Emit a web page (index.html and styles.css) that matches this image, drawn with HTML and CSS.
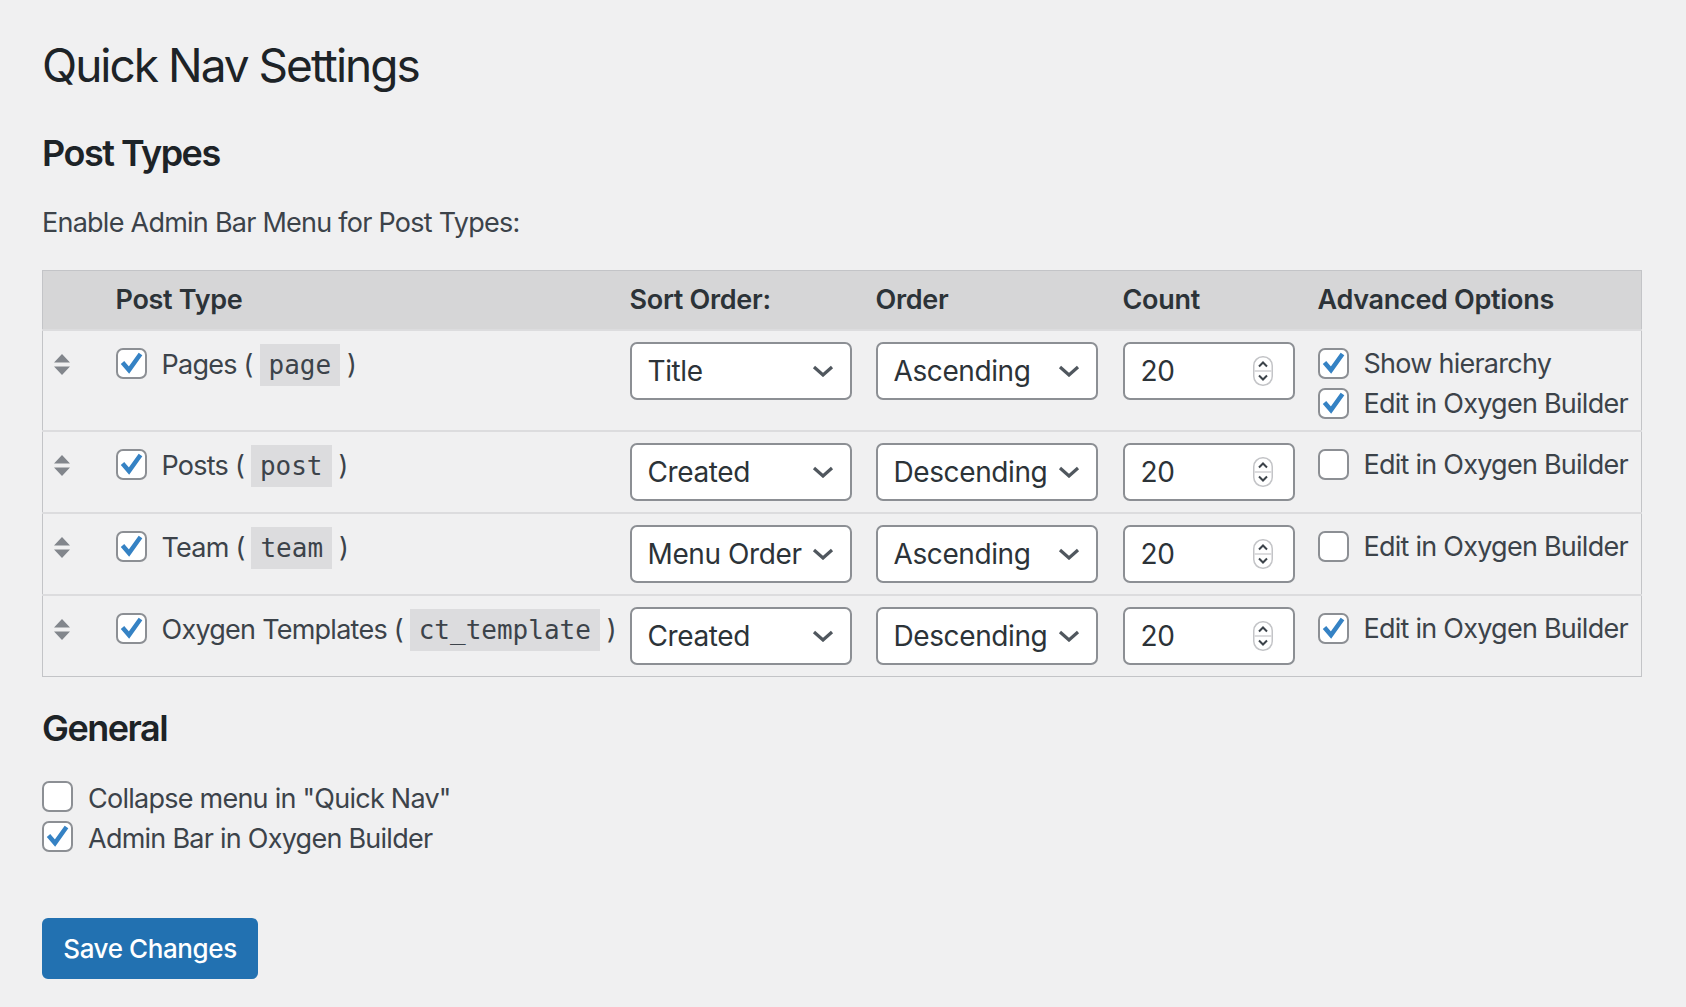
FILE: index.html
```html
<!DOCTYPE html>
<html lang="en">
<head>
    <meta charset="UTF-8">
    <meta name="viewport" content="width=device-width, initial-scale=1.0">
    <title>Quick Nav Settings</title>
    <link rel="stylesheet" href="styles.css">
</head>
<body>
<div class="wrap">
    <h1>Quick Nav Settings</h1>

    <h2>Post Types</h2>
    <p class="intro">Enable Admin Bar Menu for Post Types:</p>

    <table class="types">
        <colgroup>
            <col class="col-handle">
            <col class="col-type">
            <col class="col-sort">
            <col class="col-order">
            <col class="col-count">
            <col class="col-advanced">
        </colgroup>
        <thead>
        <tr>
            <th></th>
            <th>Post Type</th>
            <th>Sort Order:</th>
            <th>Order</th>
            <th>Count</th>
            <th>Advanced Options</th>
        </tr>
        </thead>
        <tbody>
        <tr>
            <td class="handle">
                <svg width="16" height="21" viewBox="0 0 16 21"><path d="M8 0 16 8.5H0z M0 12.5h16L8 21z"/></svg>
            </td>
            <td>
                <label class="check">
                    <span class="box on"><svg viewBox="0 0 27 27"><path d="M4.5 12.5 11 20 22.5 4"/></svg></span>
                    <span class="label">Pages ( <code>page</code> )</span>
                </label>
            </td>
            <td><div class="select">Title<svg viewBox="0 0 22 12"><path d="M2 2l9 8 9-8"/></svg></div></td>
            <td><div class="select">Ascending<svg viewBox="0 0 22 12"><path d="M2 2l9 8 9-8"/></svg></div></td>
            <td>
                <div class="number">20
                    <svg class="spin" viewBox="0 0 20 30"><rect x=".75" y=".75" width="18.5" height="28.5" rx="9"/><path class="line" d="M1 15h18"/><path d="M6 10.5 10 6.5l4 4M6 19.5l4 4 4-4"/></svg>
                </div>
            </td>
            <td>
                <div class="options">
                    <label class="check">
                        <span class="box on"><svg viewBox="0 0 27 27"><path d="M4.5 12.5 11 20 22.5 4"/></svg></span>
                        <span class="label">Show hierarchy</span>
                    </label>
                    <label class="check">
                        <span class="box on"><svg viewBox="0 0 27 27"><path d="M4.5 12.5 11 20 22.5 4"/></svg></span>
                        <span class="label">Edit in Oxygen Builder</span>
                    </label>
                </div>
            </td>
        </tr>
        <tr>
            <td class="handle">
                <svg width="16" height="21" viewBox="0 0 16 21"><path d="M8 0 16 8.5H0z M0 12.5h16L8 21z"/></svg>
            </td>
            <td>
                <label class="check">
                    <span class="box on"><svg viewBox="0 0 27 27"><path d="M4.5 12.5 11 20 22.5 4"/></svg></span>
                    <span class="label">Posts ( <code>post</code> )</span>
                </label>
            </td>
            <td><div class="select">Created<svg viewBox="0 0 22 12"><path d="M2 2l9 8 9-8"/></svg></div></td>
            <td><div class="select">Descending<svg viewBox="0 0 22 12"><path d="M2 2l9 8 9-8"/></svg></div></td>
            <td>
                <div class="number">20
                    <svg class="spin" viewBox="0 0 20 30"><rect x=".75" y=".75" width="18.5" height="28.5" rx="9"/><path class="line" d="M1 15h18"/><path d="M6 10.5 10 6.5l4 4M6 19.5l4 4 4-4"/></svg>
                </div>
            </td>
            <td>
                <div class="options">
                    <label class="check">
                        <span class="box"></span>
                        <span class="label">Edit in Oxygen Builder</span>
                    </label>
                </div>
            </td>
        </tr>
        <tr>
            <td class="handle">
                <svg width="16" height="21" viewBox="0 0 16 21"><path d="M8 0 16 8.5H0z M0 12.5h16L8 21z"/></svg>
            </td>
            <td>
                <label class="check">
                    <span class="box on"><svg viewBox="0 0 27 27"><path d="M4.5 12.5 11 20 22.5 4"/></svg></span>
                    <span class="label">Team ( <code>team</code> )</span>
                </label>
            </td>
            <td><div class="select">Menu Order<svg viewBox="0 0 22 12"><path d="M2 2l9 8 9-8"/></svg></div></td>
            <td><div class="select">Ascending<svg viewBox="0 0 22 12"><path d="M2 2l9 8 9-8"/></svg></div></td>
            <td>
                <div class="number">20
                    <svg class="spin" viewBox="0 0 20 30"><rect x=".75" y=".75" width="18.5" height="28.5" rx="9"/><path class="line" d="M1 15h18"/><path d="M6 10.5 10 6.5l4 4M6 19.5l4 4 4-4"/></svg>
                </div>
            </td>
            <td>
                <div class="options">
                    <label class="check">
                        <span class="box"></span>
                        <span class="label">Edit in Oxygen Builder</span>
                    </label>
                </div>
            </td>
        </tr>
        <tr>
            <td class="handle">
                <svg width="16" height="21" viewBox="0 0 16 21"><path d="M8 0 16 8.5H0z M0 12.5h16L8 21z"/></svg>
            </td>
            <td>
                <label class="check">
                    <span class="box on"><svg viewBox="0 0 27 27"><path d="M4.5 12.5 11 20 22.5 4"/></svg></span>
                    <span class="label">Oxygen Templates ( <code>ct_template</code> )</span>
                </label>
            </td>
            <td><div class="select">Created<svg viewBox="0 0 22 12"><path d="M2 2l9 8 9-8"/></svg></div></td>
            <td><div class="select">Descending<svg viewBox="0 0 22 12"><path d="M2 2l9 8 9-8"/></svg></div></td>
            <td>
                <div class="number">20
                    <svg class="spin" viewBox="0 0 20 30"><rect x=".75" y=".75" width="18.5" height="28.5" rx="9"/><path class="line" d="M1 15h18"/><path d="M6 10.5 10 6.5l4 4M6 19.5l4 4 4-4"/></svg>
                </div>
            </td>
            <td>
                <div class="options">
                    <label class="check">
                        <span class="box on"><svg viewBox="0 0 27 27"><path d="M4.5 12.5 11 20 22.5 4"/></svg></span>
                        <span class="label">Edit in Oxygen Builder</span>
                    </label>
                </div>
            </td>
        </tr>
        </tbody>
    </table>

    <h2 class="general">General</h2>
    <div class="general-options">
        <label class="check">
            <span class="box"></span>
            <span class="label">Collapse menu in "Quick Nav"</span>
        </label>
        <label class="check">
            <span class="box on"><svg viewBox="0 0 27 27"><path d="M4.5 12.5 11 20 22.5 4"/></svg></span>
            <span class="label">Admin Bar in Oxygen Builder</span>
        </label>
    </div>

    <button class="button-primary" type="button">Save Changes</button>
</div>
</body>
</html>
```

FILE: styles.css
```css
body {
    margin: 0;
    background-color: #f0f0f1;
    color: #3c434a;
    font-family: Inter, 'Noto Sans', sans-serif;
    font-size: 27px;
    letter-spacing: -0.75px;
}

.wrap {
    padding: 36px 42px 0;
}

h1 {
    margin: 0;
    font-size: 46px;
    line-height: 58px;
    font-weight: 400;
    letter-spacing: -2px;
    color: #1d2327;
}

h2 {
    margin: 37px 0 0;
    font-size: 36px;
    line-height: 44px;
    font-weight: 600;
    letter-spacing: -1.5px;
    color: #1d2327;
}

.intro {
    margin: 31px 0 0;
    line-height: 34px;
}

/* post type table */
.types {
    margin-top: 30px;
    width: 1600px;
    table-layout: fixed;
    border-collapse: collapse;
    border: 1px solid #c3c4c7;
}

.col-handle { width: 64px; }
.col-type { width: 514px; }
.col-sort { width: 246px; }
.col-order { width: 247px; }
.col-count { width: 195px; }

.types th {
    background-color: #d6d6d7;
    text-align: left;
    font-weight: 600;
    letter-spacing: -0.3px;
    color: #2c3338;
    height: 58px;
    padding: 0 9px;
    line-height: 34px;
}

.types td {
    vertical-align: top;
    padding: 11px 9px;
    border-top: 2px solid #dcdcde;
}

.types td.handle {
    padding-left: 11px;
    padding-top: 23px;
}

.handle svg {
    display: block;
    fill: #82868c;
}

.types td > .check,
.options {
    margin-top: 6px;
}

/* checkbox with label */
.check {
    display: flex;
    align-items: flex-start;
    gap: 15px;
    line-height: 32px;
}

.check .label {
    white-space: nowrap;
    padding-top: 1px;
}

.box {
    flex: none;
    width: 31px;
    height: 31px;
    box-sizing: border-box;
    border: 2px solid #8c8f94;
    border-radius: 7px;
    background: #fff;
}

.box svg {
    display: block;
    width: 27px;
    height: 27px;
    fill: none;
    stroke: #3582c4;
    stroke-width: 4.5;
    stroke-linejoin: miter;
}

code {
    font-family: 'DejaVu Sans Mono', monospace;
    font-size: 26px;
    letter-spacing: 0;
    background: #dcdcde;
    padding: 6px 9px;
    color: #3c434a;
}

.options {
    display: flex;
    flex-direction: column;
    gap: 9px;
}

.options .check {
    line-height: 30px;
}

/* dropdowns and number field */
.select, .number {
    display: flex;
    align-items: center;
    justify-content: space-between;
    box-sizing: border-box;
    height: 58px;
    background: #fff;
    border: 2px solid #8c8f94;
    border-radius: 7px;
    padding: 0 16px;
    font-size: 28px;
    letter-spacing: -0.4px;
    color: #2c3338;
}

.select {
    width: 222px;
}

.select svg {
    flex: none;
    width: 22px;
    height: 12px;
    fill: none;
    stroke: #50575e;
    stroke-width: 3.2;
}

.number {
    width: 172px;
    padding-right: 20px;
}

.spin {
    width: 20px;
    height: 30px;
    fill: none;
    stroke: #3c434a;
    stroke-width: 2;
}

.spin rect {
    stroke: #c3c4c7;
    stroke-width: 1.5;
}

.spin .line {
    stroke: #dcdcde;
}

h2.general {
    margin-top: 29px;
}

.general-options {
    display: flex;
    flex-direction: column;
    gap: 6px;
    margin-top: 31px;
}

.general-options .label {
    padding-top: 2px;
}

.button-primary {
    margin-top: 63px;
    width: 216px;
    height: 61px;
    background: #2271b1;
    color: #fff;
    border: none;
    border-radius: 6px;
    font-family: Inter, 'Noto Sans', sans-serif;
    font-size: 26px;
    font-weight: 500;
    letter-spacing: -0.4px;
}
```
